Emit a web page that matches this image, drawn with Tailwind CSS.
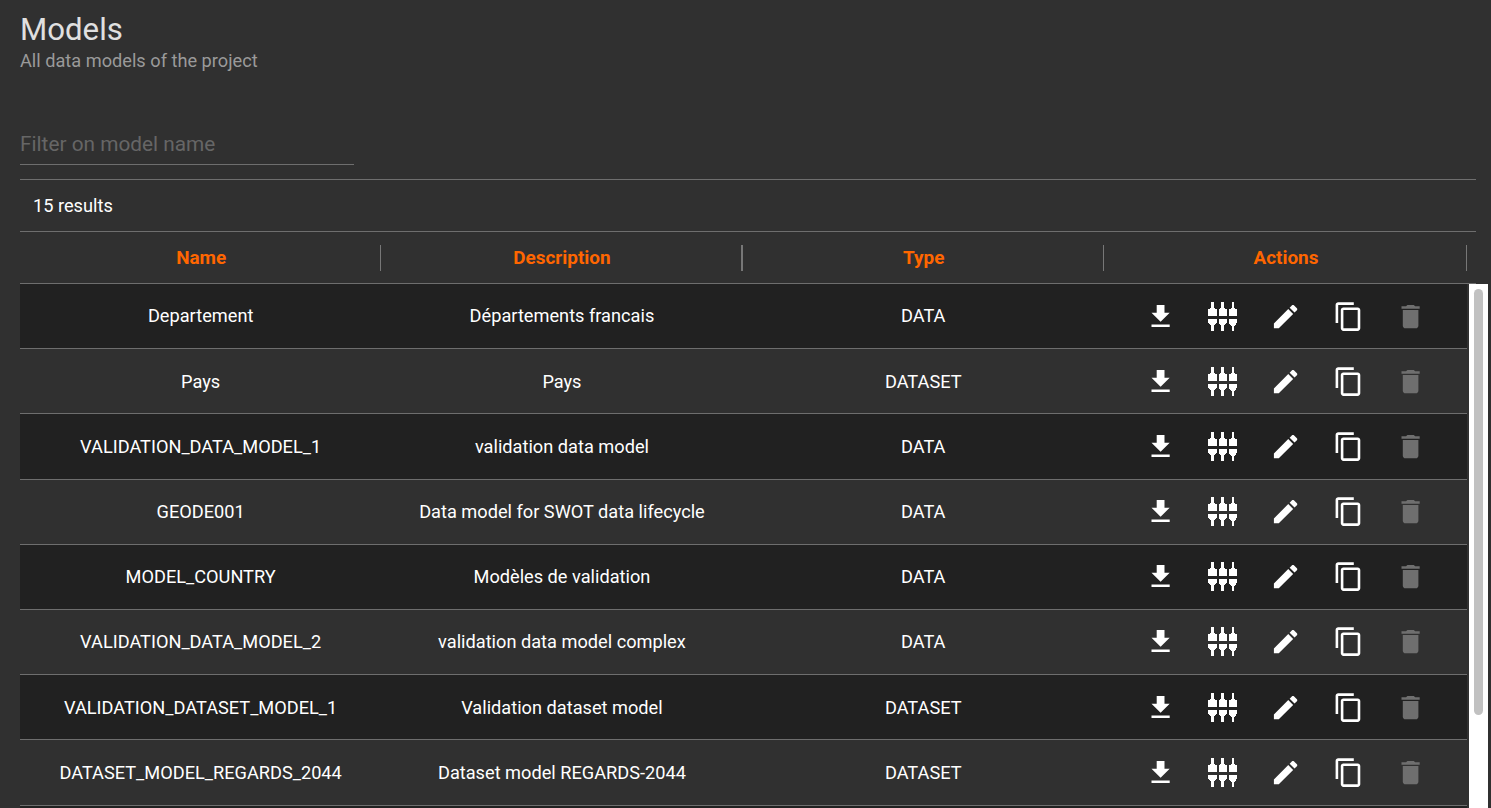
<!DOCTYPE html>
<html>
<head>
<meta charset="utf-8">
<script src="https://cdn.jsdelivr.net/npm/@tailwindcss/browser@4"></script>
</head>
<body class="bg-[#303030] overflow-hidden font-['Roboto',sans-serif]">
<div class="h-[808px] overflow-hidden pl-5 text-white">
  <div class="text-[31.2px] leading-[32px] pt-[14px] text-[#e0e0e0]">Models</div>
  <div class="text-[18.2px] leading-[24px] mt-[3px] text-[#9a9a9a]">All data models of the project</div>
  <div class="w-[334px] h-[36px] mt-[56px] border-b border-[#6e6e6e] text-[20.8px] leading-[30px] text-[#666666]">Filter on model name</div>
  <div class="w-[1456px] h-[53px] mt-[14px] border-y border-[#6e6e6e] pl-[13px] flex items-center text-[18.2px]">15 results</div>
  <div class="w-[1456px] h-[51px] grid grid-cols-[361.3px_361.3px_361.3px_363.1px] items-center text-[#ff6600] font-bold text-[18.9px]">
    <div class="w-[1447px] col-span-4 grid grid-cols-subgrid items-center">
      <div class="h-[26px] pt-px pl-[2px] flex items-center justify-center border-r border-[#777777]">Name</div>
      <div class="h-[26px] pt-px pl-[2px] flex items-center justify-center border-r-2 border-[#777777]">Description</div>
      <div class="h-[26px] pt-px pl-[2px] flex items-center justify-center border-r border-[#777777]">Type</div>
      <div class="h-[26px] pt-px pl-[2px] flex items-center justify-center border-r border-[#777777]">Actions</div>
    </div>
  </div>
  <div class="w-[1456px] border-t border-[#6e6e6e]"></div>
  <div class="flex gap-[2px]">
    <div class="w-[1447px] text-[18.2px] text-center">

      <div class="h-[65.2px] grid grid-cols-[361.3px_361.3px_361.3px_363.1px] items-center bg-[#212121] border-b border-[#6e6e6e]"><div>Departement</div><div>Départements francais</div><div>DATA</div><div class="flex justify-center"><svg class="w-[31.2px] h-[31.2px] mx-[15.6px]" viewBox="0 0 24 24" fill="#fff"><path d="M19 9h-4V3H9v6H5l7 7 7-7zM5 18v2h14v-2H5z"/></svg><svg class="w-[31.2px] h-[31.2px] mx-[15.6px]" viewBox="0 0 32 32" fill="#fff" shape-rendering="crispEdges"><path d="M4.400.7h2.800V7.200l2.700 1.400V15H1.500V8.600l2.900-1.400zM14.800.7h2.800V7.200l2.700 1.400V15h-8.400V8.600l2.900-1.400zM25.300.7h2.800V7.200l2.700 1.400V15h-8.400V8.600l2.900-1.400zM1.500 18.200h8.400v4.300L7.200 25.500v5.100H4.400v-5.100l-2.900-3zM11.900 18.200h8.400v4.300l-2.700 3v5.100h-2.800v-5.100l-2.900-3zM22.400 18.200h8.400v4.300l-2.700 3v5.100h-2.800v-5.100l-2.900-3z"/></svg><svg class="w-[31.2px] h-[31.2px] mx-[15.6px]" viewBox="0 0 24 24" fill="#fff"><path d="M3 17.25V21h3.75L17.81 9.94l-3.75-3.75L3 17.25zM20.71 7.04c.39-.39.39-1.02 0-1.41l-2.34-2.34c-.39-.39-1.02-.39-1.41 0l-1.83 1.83 3.75 3.75 1.83-1.83z"/></svg><svg class="w-[31.2px] h-[31.2px] ml-[16.1px] mr-[15.1px]" viewBox="0 0 24 24" fill="#fff"><path d="M16 1H4c-1.1 0-2 .9-2 2v14h2V3h12V1zm3 4H8c-1.1 0-2 .9-2 2v14c0 1.1.9 2 2 2h11c1.1 0 2-.9 2-2V7c0-1.1-.9-2-2-2zm0 16H8V7h11v14z"/></svg><svg class="w-[31.2px] h-[31.2px] mx-[15.6px]" viewBox="0 0 24 24" fill="#6f6f6f"><path d="M6 19c0 1.100.9 2 2 2h8c1.100 0 2-.9 2-2V7H6v12zM19 4h-3.500l-1-1h-5l-1 1H5v2h14V4z"/></svg></div></div>

      <div class="h-[65.2px] grid grid-cols-[361.3px_361.3px_361.3px_363.1px] items-center border-b border-[#6e6e6e]"><div>Pays</div><div>Pays</div><div>DATASET</div><div class="flex justify-center"><svg class="w-[31.2px] h-[31.2px] mx-[15.6px]" viewBox="0 0 24 24" fill="#fff"><path d="M19 9h-4V3H9v6H5l7 7 7-7zM5 18v2h14v-2H5z"/></svg><svg class="w-[31.2px] h-[31.2px] mx-[15.6px]" viewBox="0 0 32 32" fill="#fff" shape-rendering="crispEdges"><path d="M4.400.7h2.800V7.200l2.700 1.400V15H1.500V8.600l2.900-1.400zM14.800.7h2.800V7.200l2.700 1.400V15h-8.400V8.600l2.900-1.400zM25.300.7h2.800V7.200l2.700 1.400V15h-8.400V8.600l2.900-1.400zM1.500 18.200h8.400v4.300L7.200 25.500v5.100H4.400v-5.100l-2.900-3zM11.900 18.200h8.400v4.300l-2.700 3v5.100h-2.800v-5.100l-2.900-3zM22.400 18.200h8.400v4.300l-2.700 3v5.100h-2.800v-5.100l-2.900-3z"/></svg><svg class="w-[31.2px] h-[31.2px] mx-[15.6px]" viewBox="0 0 24 24" fill="#fff"><path d="M3 17.25V21h3.75L17.81 9.94l-3.75-3.75L3 17.25zM20.71 7.04c.39-.39.39-1.02 0-1.41l-2.34-2.34c-.39-.39-1.02-.39-1.41 0l-1.83 1.83 3.75 3.75 1.83-1.83z"/></svg><svg class="w-[31.2px] h-[31.2px] ml-[16.1px] mr-[15.1px]" viewBox="0 0 24 24" fill="#fff"><path d="M16 1H4c-1.1 0-2 .9-2 2v14h2V3h12V1zm3 4H8c-1.1 0-2 .9-2 2v14c0 1.1.9 2 2 2h11c1.1 0 2-.9 2-2V7c0-1.1-.9-2-2-2zm0 16H8V7h11v14z"/></svg><svg class="w-[31.2px] h-[31.2px] mx-[15.6px]" viewBox="0 0 24 24" fill="#6f6f6f"><path d="M6 19c0 1.100.9 2 2 2h8c1.100 0 2-.9 2-2V7H6v12zM19 4h-3.500l-1-1h-5l-1 1H5v2h14V4z"/></svg></div></div>

      <div class="h-[65.2px] grid grid-cols-[361.3px_361.3px_361.3px_363.1px] items-center bg-[#212121] border-b border-[#6e6e6e]"><div>VALIDATION_DATA_MODEL_1</div><div>validation data model</div><div>DATA</div><div class="flex justify-center"><svg class="w-[31.2px] h-[31.2px] mx-[15.6px]" viewBox="0 0 24 24" fill="#fff"><path d="M19 9h-4V3H9v6H5l7 7 7-7zM5 18v2h14v-2H5z"/></svg><svg class="w-[31.2px] h-[31.2px] mx-[15.6px]" viewBox="0 0 32 32" fill="#fff" shape-rendering="crispEdges"><path d="M4.400.7h2.800V7.200l2.700 1.400V15H1.500V8.600l2.900-1.400zM14.800.7h2.800V7.200l2.700 1.400V15h-8.400V8.600l2.900-1.400zM25.300.7h2.800V7.200l2.700 1.400V15h-8.400V8.600l2.900-1.400zM1.500 18.200h8.400v4.300L7.200 25.500v5.100H4.400v-5.100l-2.900-3zM11.900 18.200h8.400v4.300l-2.700 3v5.100h-2.800v-5.100l-2.900-3zM22.400 18.200h8.400v4.300l-2.700 3v5.100h-2.800v-5.100l-2.900-3z"/></svg><svg class="w-[31.2px] h-[31.2px] mx-[15.6px]" viewBox="0 0 24 24" fill="#fff"><path d="M3 17.25V21h3.75L17.81 9.94l-3.75-3.75L3 17.25zM20.71 7.04c.39-.39.39-1.02 0-1.41l-2.34-2.34c-.39-.39-1.02-.39-1.41 0l-1.83 1.83 3.75 3.75 1.83-1.83z"/></svg><svg class="w-[31.2px] h-[31.2px] ml-[16.1px] mr-[15.1px]" viewBox="0 0 24 24" fill="#fff"><path d="M16 1H4c-1.1 0-2 .9-2 2v14h2V3h12V1zm3 4H8c-1.1 0-2 .9-2 2v14c0 1.1.9 2 2 2h11c1.1 0 2-.9 2-2V7c0-1.1-.9-2-2-2zm0 16H8V7h11v14z"/></svg><svg class="w-[31.2px] h-[31.2px] mx-[15.6px]" viewBox="0 0 24 24" fill="#6f6f6f"><path d="M6 19c0 1.100.9 2 2 2h8c1.100 0 2-.9 2-2V7H6v12zM19 4h-3.500l-1-1h-5l-1 1H5v2h14V4z"/></svg></div></div>

      <div class="h-[65.2px] grid grid-cols-[361.3px_361.3px_361.3px_363.1px] items-center border-b border-[#6e6e6e]"><div>GEODE001</div><div>Data model for SWOT data lifecycle</div><div>DATA</div><div class="flex justify-center"><svg class="w-[31.2px] h-[31.2px] mx-[15.6px]" viewBox="0 0 24 24" fill="#fff"><path d="M19 9h-4V3H9v6H5l7 7 7-7zM5 18v2h14v-2H5z"/></svg><svg class="w-[31.2px] h-[31.2px] mx-[15.6px]" viewBox="0 0 32 32" fill="#fff" shape-rendering="crispEdges"><path d="M4.400.7h2.800V7.200l2.700 1.400V15H1.500V8.600l2.900-1.400zM14.800.7h2.800V7.200l2.700 1.400V15h-8.400V8.600l2.900-1.400zM25.300.7h2.800V7.200l2.700 1.400V15h-8.400V8.600l2.900-1.400zM1.500 18.200h8.400v4.300L7.200 25.500v5.100H4.400v-5.100l-2.900-3zM11.900 18.200h8.400v4.300l-2.700 3v5.100h-2.800v-5.100l-2.900-3zM22.400 18.200h8.400v4.300l-2.700 3v5.100h-2.800v-5.100l-2.900-3z"/></svg><svg class="w-[31.2px] h-[31.2px] mx-[15.6px]" viewBox="0 0 24 24" fill="#fff"><path d="M3 17.25V21h3.75L17.81 9.94l-3.75-3.75L3 17.25zM20.71 7.04c.39-.39.39-1.02 0-1.41l-2.34-2.34c-.39-.39-1.02-.39-1.41 0l-1.83 1.83 3.75 3.75 1.83-1.83z"/></svg><svg class="w-[31.2px] h-[31.2px] ml-[16.1px] mr-[15.1px]" viewBox="0 0 24 24" fill="#fff"><path d="M16 1H4c-1.1 0-2 .9-2 2v14h2V3h12V1zm3 4H8c-1.1 0-2 .9-2 2v14c0 1.1.9 2 2 2h11c1.1 0 2-.9 2-2V7c0-1.1-.9-2-2-2zm0 16H8V7h11v14z"/></svg><svg class="w-[31.2px] h-[31.2px] mx-[15.6px]" viewBox="0 0 24 24" fill="#6f6f6f"><path d="M6 19c0 1.100.9 2 2 2h8c1.100 0 2-.9 2-2V7H6v12zM19 4h-3.500l-1-1h-5l-1 1H5v2h14V4z"/></svg></div></div>

      <div class="h-[65.2px] grid grid-cols-[361.3px_361.3px_361.3px_363.1px] items-center bg-[#212121] border-b border-[#6e6e6e]"><div>MODEL_COUNTRY</div><div>Modèles de validation</div><div>DATA</div><div class="flex justify-center"><svg class="w-[31.2px] h-[31.2px] mx-[15.6px]" viewBox="0 0 24 24" fill="#fff"><path d="M19 9h-4V3H9v6H5l7 7 7-7zM5 18v2h14v-2H5z"/></svg><svg class="w-[31.2px] h-[31.2px] mx-[15.6px]" viewBox="0 0 32 32" fill="#fff" shape-rendering="crispEdges"><path d="M4.400.7h2.800V7.200l2.700 1.400V15H1.500V8.600l2.900-1.400zM14.800.7h2.800V7.200l2.700 1.400V15h-8.400V8.600l2.900-1.400zM25.300.7h2.800V7.200l2.700 1.400V15h-8.400V8.600l2.900-1.400zM1.500 18.200h8.400v4.300L7.200 25.500v5.100H4.400v-5.100l-2.900-3zM11.900 18.200h8.400v4.300l-2.700 3v5.100h-2.800v-5.100l-2.900-3zM22.400 18.200h8.400v4.300l-2.700 3v5.100h-2.800v-5.100l-2.900-3z"/></svg><svg class="w-[31.2px] h-[31.2px] mx-[15.6px]" viewBox="0 0 24 24" fill="#fff"><path d="M3 17.25V21h3.75L17.81 9.94l-3.75-3.75L3 17.25zM20.71 7.04c.39-.39.39-1.02 0-1.41l-2.34-2.34c-.39-.39-1.02-.39-1.41 0l-1.83 1.83 3.75 3.75 1.83-1.83z"/></svg><svg class="w-[31.2px] h-[31.2px] ml-[16.1px] mr-[15.1px]" viewBox="0 0 24 24" fill="#fff"><path d="M16 1H4c-1.1 0-2 .9-2 2v14h2V3h12V1zm3 4H8c-1.1 0-2 .9-2 2v14c0 1.1.9 2 2 2h11c1.1 0 2-.9 2-2V7c0-1.1-.9-2-2-2zm0 16H8V7h11v14z"/></svg><svg class="w-[31.2px] h-[31.2px] mx-[15.6px]" viewBox="0 0 24 24" fill="#6f6f6f"><path d="M6 19c0 1.100.9 2 2 2h8c1.100 0 2-.9 2-2V7H6v12zM19 4h-3.500l-1-1h-5l-1 1H5v2h14V4z"/></svg></div></div>

      <div class="h-[65.2px] grid grid-cols-[361.3px_361.3px_361.3px_363.1px] items-center border-b border-[#6e6e6e]"><div>VALIDATION_DATA_MODEL_2</div><div>validation data model complex</div><div>DATA</div><div class="flex justify-center"><svg class="w-[31.2px] h-[31.2px] mx-[15.6px]" viewBox="0 0 24 24" fill="#fff"><path d="M19 9h-4V3H9v6H5l7 7 7-7zM5 18v2h14v-2H5z"/></svg><svg class="w-[31.2px] h-[31.2px] mx-[15.6px]" viewBox="0 0 32 32" fill="#fff" shape-rendering="crispEdges"><path d="M4.400.7h2.800V7.200l2.700 1.400V15H1.500V8.600l2.900-1.400zM14.800.7h2.800V7.200l2.700 1.400V15h-8.400V8.600l2.900-1.400zM25.300.7h2.800V7.200l2.700 1.400V15h-8.400V8.600l2.900-1.400zM1.500 18.200h8.400v4.300L7.200 25.500v5.100H4.400v-5.100l-2.900-3zM11.900 18.200h8.400v4.300l-2.700 3v5.100h-2.800v-5.100l-2.900-3zM22.400 18.200h8.400v4.300l-2.700 3v5.100h-2.800v-5.100l-2.900-3z"/></svg><svg class="w-[31.2px] h-[31.2px] mx-[15.6px]" viewBox="0 0 24 24" fill="#fff"><path d="M3 17.25V21h3.75L17.81 9.94l-3.75-3.75L3 17.25zM20.71 7.04c.39-.39.39-1.02 0-1.41l-2.34-2.34c-.39-.39-1.02-.39-1.41 0l-1.83 1.83 3.75 3.75 1.83-1.83z"/></svg><svg class="w-[31.2px] h-[31.2px] ml-[16.1px] mr-[15.1px]" viewBox="0 0 24 24" fill="#fff"><path d="M16 1H4c-1.1 0-2 .9-2 2v14h2V3h12V1zm3 4H8c-1.1 0-2 .9-2 2v14c0 1.1.9 2 2 2h11c1.1 0 2-.9 2-2V7c0-1.1-.9-2-2-2zm0 16H8V7h11v14z"/></svg><svg class="w-[31.2px] h-[31.2px] mx-[15.6px]" viewBox="0 0 24 24" fill="#6f6f6f"><path d="M6 19c0 1.100.9 2 2 2h8c1.100 0 2-.9 2-2V7H6v12zM19 4h-3.500l-1-1h-5l-1 1H5v2h14V4z"/></svg></div></div>

      <div class="h-[65.2px] grid grid-cols-[361.3px_361.3px_361.3px_363.1px] items-center bg-[#212121] border-b border-[#6e6e6e]"><div>VALIDATION_DATASET_MODEL_1</div><div>Validation dataset model</div><div>DATASET</div><div class="flex justify-center"><svg class="w-[31.2px] h-[31.2px] mx-[15.6px]" viewBox="0 0 24 24" fill="#fff"><path d="M19 9h-4V3H9v6H5l7 7 7-7zM5 18v2h14v-2H5z"/></svg><svg class="w-[31.2px] h-[31.2px] mx-[15.6px]" viewBox="0 0 32 32" fill="#fff" shape-rendering="crispEdges"><path d="M4.400.7h2.800V7.200l2.700 1.400V15H1.500V8.600l2.900-1.400zM14.800.7h2.800V7.200l2.700 1.400V15h-8.400V8.600l2.900-1.400zM25.300.7h2.800V7.200l2.700 1.400V15h-8.400V8.600l2.900-1.400zM1.500 18.200h8.400v4.300L7.200 25.500v5.100H4.400v-5.100l-2.900-3zM11.900 18.200h8.400v4.300l-2.700 3v5.100h-2.800v-5.100l-2.900-3zM22.400 18.200h8.400v4.300l-2.700 3v5.100h-2.800v-5.100l-2.900-3z"/></svg><svg class="w-[31.2px] h-[31.2px] mx-[15.6px]" viewBox="0 0 24 24" fill="#fff"><path d="M3 17.25V21h3.75L17.81 9.94l-3.75-3.75L3 17.25zM20.71 7.04c.39-.39.39-1.02 0-1.41l-2.34-2.34c-.39-.39-1.02-.39-1.41 0l-1.83 1.83 3.75 3.75 1.83-1.83z"/></svg><svg class="w-[31.2px] h-[31.2px] ml-[16.1px] mr-[15.1px]" viewBox="0 0 24 24" fill="#fff"><path d="M16 1H4c-1.1 0-2 .9-2 2v14h2V3h12V1zm3 4H8c-1.1 0-2 .9-2 2v14c0 1.1.9 2 2 2h11c1.1 0 2-.9 2-2V7c0-1.1-.9-2-2-2zm0 16H8V7h11v14z"/></svg><svg class="w-[31.2px] h-[31.2px] mx-[15.6px]" viewBox="0 0 24 24" fill="#6f6f6f"><path d="M6 19c0 1.100.9 2 2 2h8c1.100 0 2-.9 2-2V7H6v12zM19 4h-3.500l-1-1h-5l-1 1H5v2h14V4z"/></svg></div></div>

      <div class="h-[65.2px] grid grid-cols-[361.3px_361.3px_361.3px_363.1px] items-center border-b border-[#6e6e6e]"><div>DATASET_MODEL_REGARDS_2044</div><div>Dataset model REGARDS-2044</div><div>DATASET</div><div class="flex justify-center"><svg class="w-[31.2px] h-[31.2px] mx-[15.6px]" viewBox="0 0 24 24" fill="#fff"><path d="M19 9h-4V3H9v6H5l7 7 7-7zM5 18v2h14v-2H5z"/></svg><svg class="w-[31.2px] h-[31.2px] mx-[15.6px]" viewBox="0 0 32 32" fill="#fff" shape-rendering="crispEdges"><path d="M4.400.7h2.800V7.200l2.700 1.400V15H1.500V8.600l2.900-1.400zM14.800.7h2.800V7.200l2.700 1.400V15h-8.400V8.600l2.900-1.400zM25.300.7h2.800V7.200l2.700 1.400V15h-8.400V8.600l2.900-1.400zM1.500 18.200h8.400v4.300L7.200 25.500v5.100H4.400v-5.100l-2.900-3zM11.900 18.200h8.400v4.300l-2.700 3v5.100h-2.800v-5.100l-2.900-3zM22.400 18.200h8.400v4.300l-2.700 3v5.100h-2.800v-5.100l-2.900-3z"/></svg><svg class="w-[31.2px] h-[31.2px] mx-[15.6px]" viewBox="0 0 24 24" fill="#fff"><path d="M3 17.25V21h3.75L17.81 9.94l-3.75-3.75L3 17.25zM20.71 7.04c.39-.39.39-1.02 0-1.41l-2.34-2.34c-.39-.39-1.02-.39-1.41 0l-1.83 1.83 3.75 3.75 1.83-1.83z"/></svg><svg class="w-[31.2px] h-[31.2px] ml-[16.1px] mr-[15.1px]" viewBox="0 0 24 24" fill="#fff"><path d="M16 1H4c-1.1 0-2 .9-2 2v14h2V3h12V1zm3 4H8c-1.1 0-2 .9-2 2v14c0 1.1.9 2 2 2h11c1.1 0 2-.9 2-2V7c0-1.1-.9-2-2-2zm0 16H8V7h11v14z"/></svg><svg class="w-[31.2px] h-[31.2px] mx-[15.6px]" viewBox="0 0 24 24" fill="#6f6f6f"><path d="M6 19c0 1.100.9 2 2 2h8c1.100 0 2-.9 2-2V7H6v12zM19 4h-3.500l-1-1h-5l-1 1H5v2h14V4z"/></svg></div></div>

      <div class="h-[65.2px] bg-[#212121]"></div>
    </div>
    <div class="w-[19px] h-[524px] bg-white shrink-0 pt-[5px] pl-[5px]">
      <div class="w-[9px] h-[426px] rounded-full bg-[#c1c1c1]"></div>
    </div>
  </div>
</div>
</body>
</html>
